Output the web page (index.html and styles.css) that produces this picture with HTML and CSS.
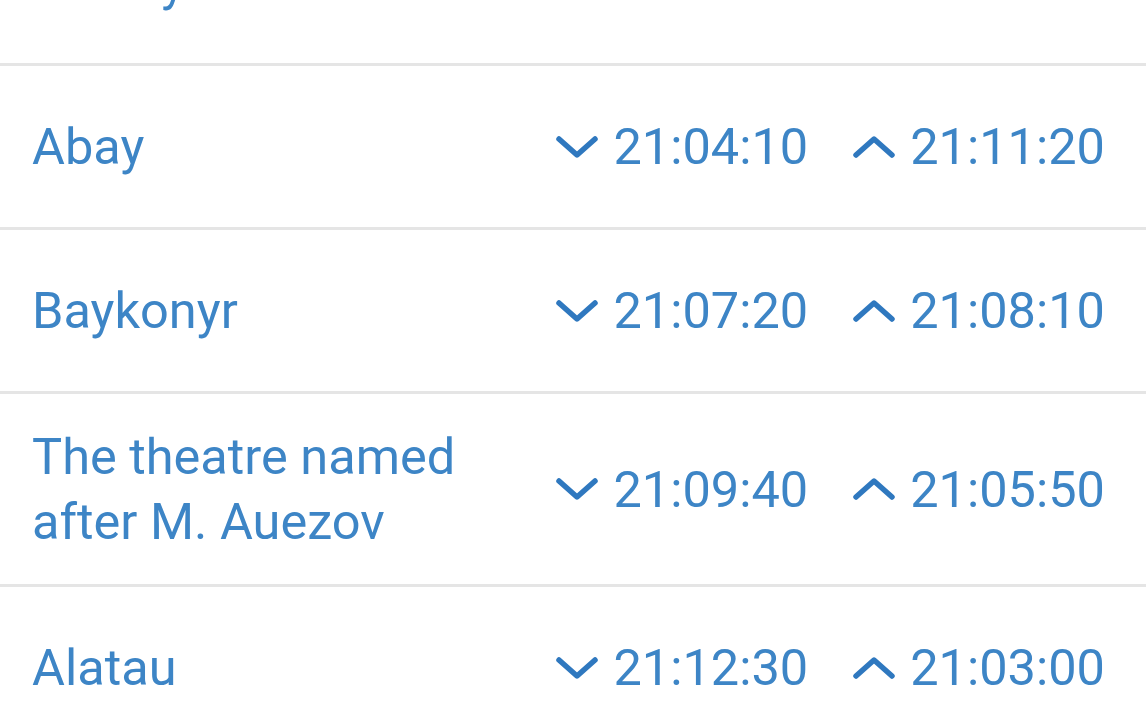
FILE: index.html
```html
<!DOCTYPE html>
<html lang="en">
<head>
  <meta charset="UTF-8">
  <meta name="viewport" content="width=device-width, initial-scale=1.0">
  <title>Stations</title>
  <link rel="stylesheet" href="styles.css">
</head>
<body>
  <ul class="stations">
    <li class="station">
      <span class="name">Almaly</span>
      <span class="time"><svg class="chev" viewBox="0 0 44 24"><path d="M4 4 L22 20 L40 4"/></svg>21:01:50</span>
      <span class="time"><svg class="chev" viewBox="0 0 44 24"><path d="M4 20 L22 4 L40 20"/></svg>21:14:00</span>
    </li>
    <li class="station">
      <span class="name">Abay</span>
      <span class="time"><svg class="chev" viewBox="0 0 44 24"><path d="M4 4 L22 20 L40 4"/></svg>21:04:10</span>
      <span class="time"><svg class="chev" viewBox="0 0 44 24"><path d="M4 20 L22 4 L40 20"/></svg>21:11:20</span>
    </li>
    <li class="station">
      <span class="name">Baykonyr</span>
      <span class="time"><svg class="chev" viewBox="0 0 44 24"><path d="M4 4 L22 20 L40 4"/></svg>21:07:20</span>
      <span class="time"><svg class="chev" viewBox="0 0 44 24"><path d="M4 20 L22 4 L40 20"/></svg>21:08:10</span>
    </li>
    <li class="station">
      <span class="name">The theatre named<br>after M. Auezov</span>
      <span class="time"><svg class="chev" viewBox="0 0 44 24"><path d="M4 4 L22 20 L40 4"/></svg>21:09:40</span>
      <span class="time"><svg class="chev" viewBox="0 0 44 24"><path d="M4 20 L22 4 L40 20"/></svg>21:05:50</span>
    </li>
    <li class="station">
      <span class="name">Alatau</span>
      <span class="time"><svg class="chev" viewBox="0 0 44 24"><path d="M4 4 L22 20 L40 4"/></svg>21:12:30</span>
      <span class="time"><svg class="chev" viewBox="0 0 44 24"><path d="M4 20 L22 4 L40 20"/></svg>21:03:00</span>
    </li>
  </ul>
</body>
</html>
```

FILE: styles.css
```css
body {
  margin: 0;
  font-family: Roboto, "Liberation Sans", sans-serif;
  background-color: #ffffff;
  color: #3d85c6;
  overflow: hidden;
}
.stations {
  list-style: none;
  margin: -98px 0 0 0;
  padding: 0;
}
.station {
  display: flex;
  align-items: center;
  box-sizing: border-box;
  min-height: 164px;
  padding: 30px 41px 30px 32px;
  border-bottom: 3px solid #e5e5e5;
  font-size: 50.5px;
  line-height: 65px;
}
.name {
  flex: 1;
}
.time {
  display: flex;
  align-items: center;
  gap: 14px;
  margin-left: 44px;
}
.chev {
  width: 44px;
  height: 24px;
  fill: none;
  stroke: #2f78bf;
  stroke-width: 5.5;
  stroke-linecap: round;
  stroke-linejoin: round;
}
```
